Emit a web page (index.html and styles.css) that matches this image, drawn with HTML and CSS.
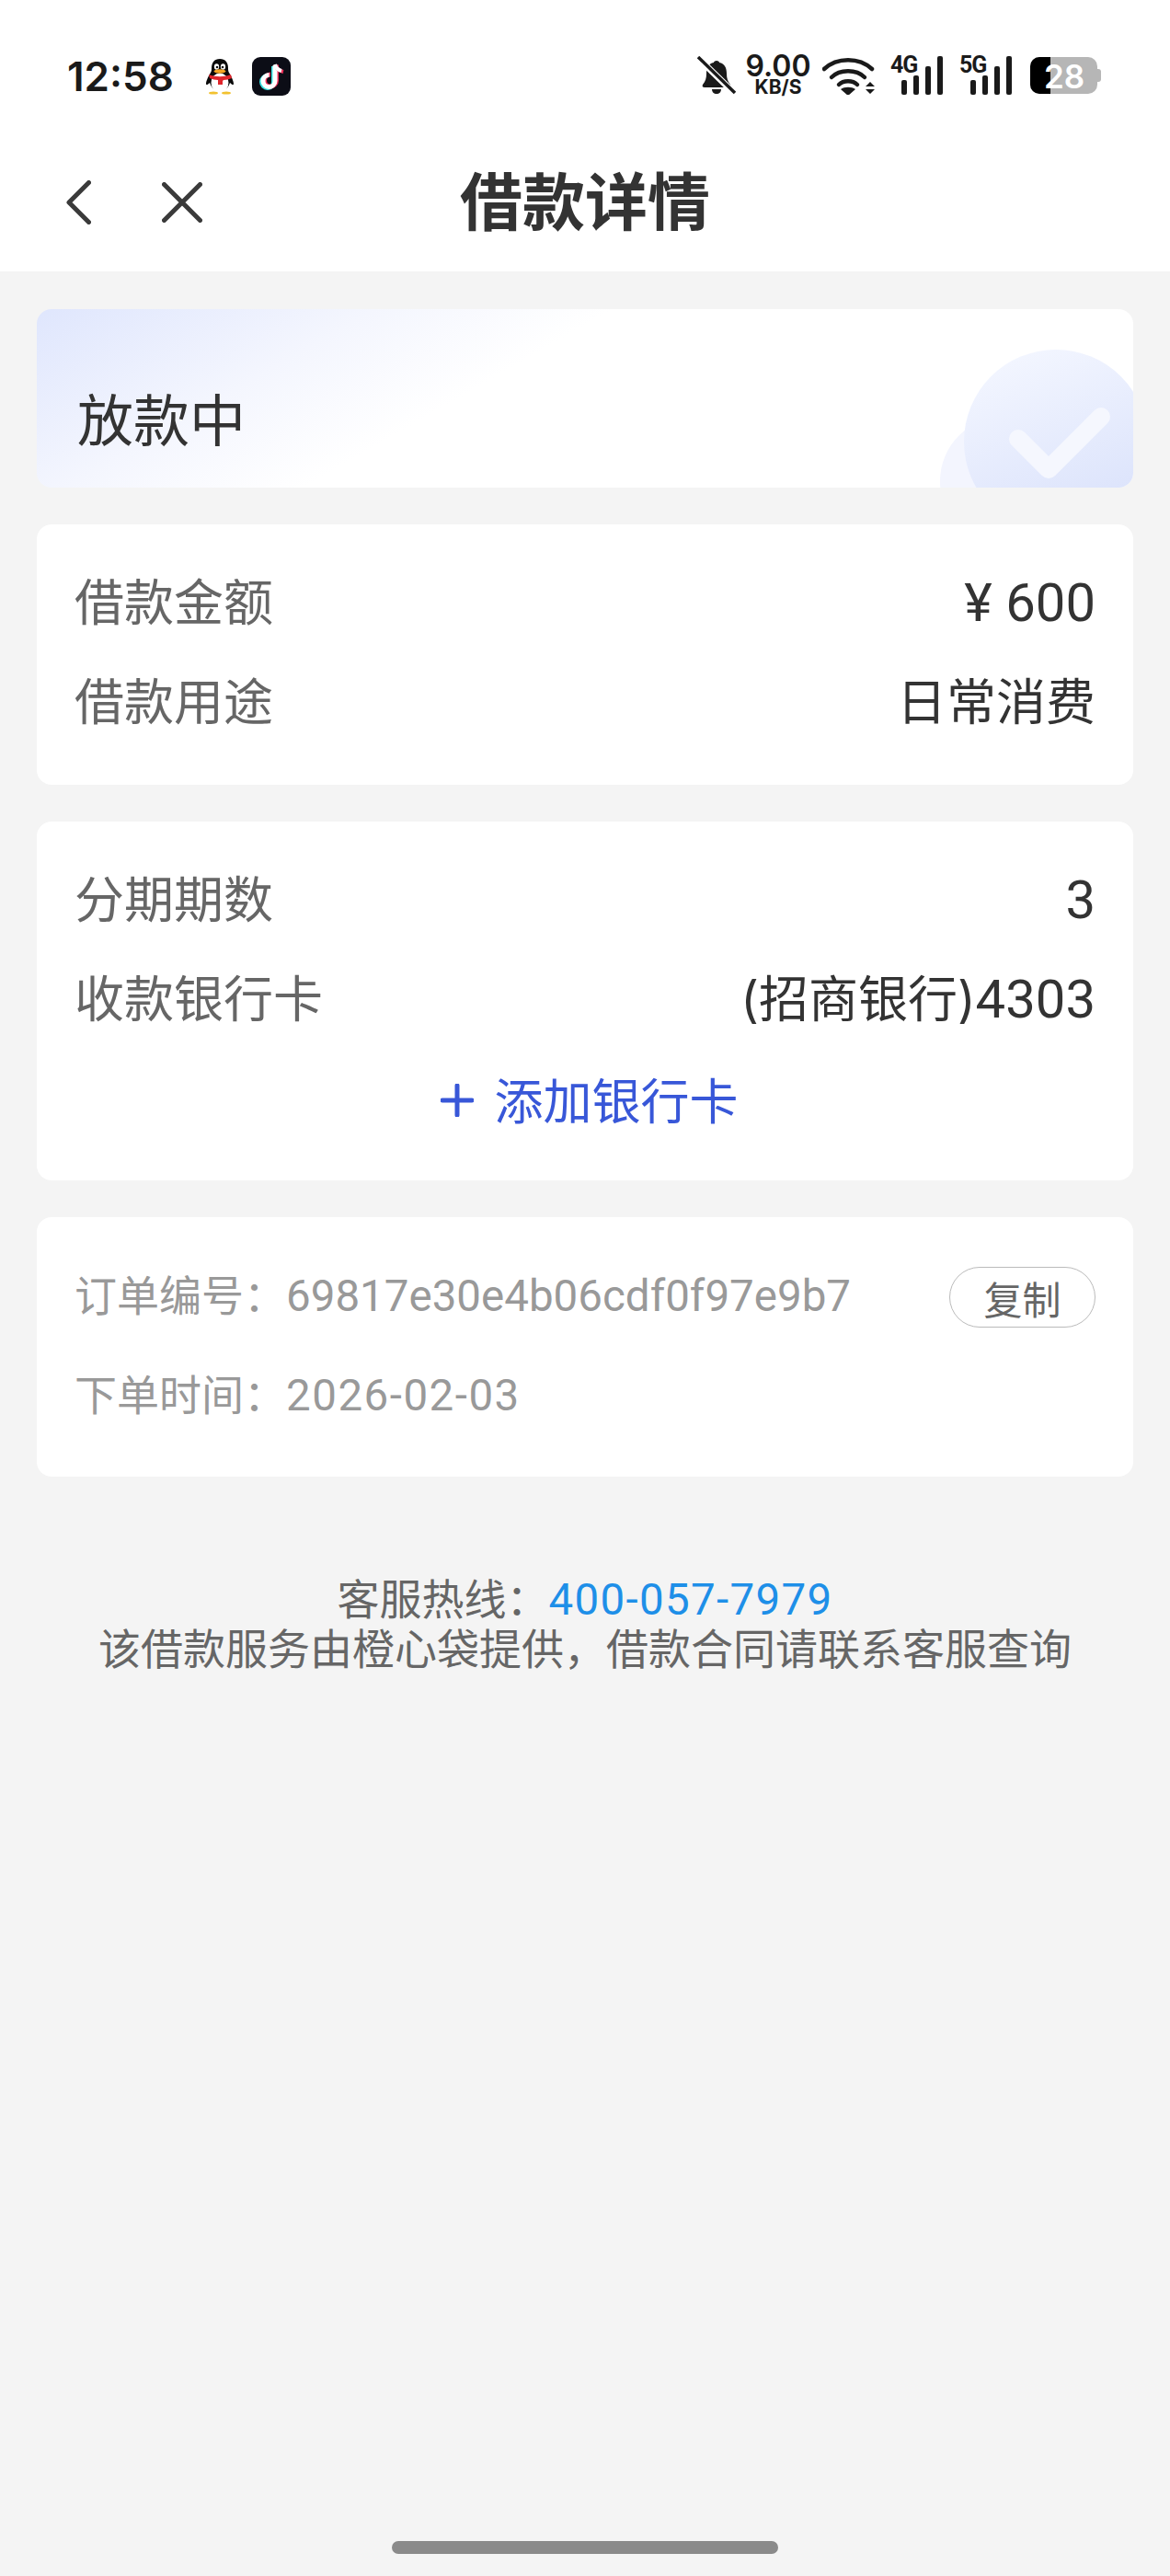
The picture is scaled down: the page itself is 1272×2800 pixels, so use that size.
FILE: index.html
```html
<!DOCTYPE html>
<html lang="zh-CN">
<head>
    <meta charset="UTF-8">
    <meta name="viewport" content="width=device-width, initial-scale=1.0">
    <title>借款详情</title>
    <link rel="stylesheet" href="styles.css">
</head>
<body>
<div class="page">
    <div class="header">
        <div class="status-bar">
            <div class="status-left">
                <span class="time">12:58</span>
                <svg class="icon-qq" viewBox="0 0 32 40" width="32" height="40">
                    <path d="M16 1c-6 0-9 4-9 10 0 2 0 3-1 5-2 3-5 9-5 12 0 2 2 1 4-1 2 6 6 9 11 9s9-3 11-9c2 2 4 3 4 1 0-3-3-9-5-12-1-2-1-3-1-5 0-6-3-10-9-10z" fill="#0b0b0b"/>
                    <ellipse cx="16" cy="27" rx="9.5" ry="10.5" fill="#fff"/>
                    <ellipse cx="12.5" cy="9.5" rx="2.6" ry="3.2" fill="#fff"/>
                    <ellipse cx="19.5" cy="9.5" rx="2.6" ry="3.2" fill="#fff"/>
                    <circle cx="13" cy="10" r="1.3" fill="#111"/>
                    <circle cx="19" cy="10" r="1.3" fill="#111"/>
                    <ellipse cx="16" cy="14.5" rx="6.5" ry="2.2" fill="#f5a623"/>
                    <path d="M4 18c8 3 16 3 24 0l1 4c-3 1-6 2-9 2l-1 1v4h-5v-5c-3 0-6-1-9-2z" fill="#e0262c"/>
                    <ellipse cx="9" cy="38" rx="5" ry="1.6" fill="#f2c230"/>
                    <ellipse cx="23" cy="38" rx="5" ry="1.6" fill="#f2c230"/>
                </svg>
                <svg class="icon-tiktok" viewBox="0 0 42 42" width="42" height="42">
                    <rect width="42" height="42" rx="9" fill="#0c0d16"/>
                    <g fill="none" stroke-width="5">
                        <path d="M25 9v17a6.500 6.500 0 1 1-6.500-6.500" stroke="#3fe0e0" transform="translate(-1.500 1)"/>
                        <path d="M25 9v17a6.500 6.500 0 1 1-6.500-6.500" stroke="#f0305a" transform="translate(1.500 -.500)"/>
                        <path d="M25 9v17a6.500 6.500 0 1 1-6.500-6.500" stroke="#fff"/>
                        <path d="M26 9c1 4 3 6 8 7" stroke="#f0305a" stroke-width="4"/>
                        <path d="M25 8c1 4 3 6 7 7" stroke="#fff" stroke-width="4"/>
                    </g>
                </svg>
            </div>
            <div class="status-right">
                <svg viewBox="0 0 42 42" width="42" height="42">
                    <path d="M21 5c2 0 3 1 3 2 6 1 8 6 8 12 0 5 1 8 4 12 1 2 0 3-2 3H8c-2 0-3-1-2-3 3-4 4-7 4-12 0-6 2-11 8-12 0-1 1-2 3-2z" fill="#1a1a1a"/>
                    <path d="M16 36h10c0 3-2 5-5 5s-5-2-5-5z" fill="#1a1a1a"/>
                    <path d="M0 1 41 41" stroke="#fff" stroke-width="7"/>
                    <path d="M1 1 41 40" stroke="#1a1a1a" stroke-width="3.500"/>
                </svg>
                <div class="speed">
                    <span class="speed-num">9.00</span>
                    <span class="speed-unit">KB/S</span>
                </div>
                <svg viewBox="0 0 58 42" width="58" height="42">
                    <g fill="none" stroke="#1a1a1a" stroke-width="4.500" stroke-linecap="round">
                        <path d="M2 14c14-13 38-13 52 0"/>
                        <path d="M10 23c9-9 27-9 36 0"/>
                        <path d="M18 31c5-5 15-5 20 0"/>
                    </g>
                    <path d="M20 36c4-3 12-3 16 0l-8 7z" fill="#1a1a1a"/>
                    <path d="M47 33l5-5 5 5zM47 36l5 5 5-5z" fill="#1a1a1a"/>
                </svg>
                <div class="signal">
                    <span class="signal-type">4G</span>
                    <i class="bar b1"></i><i class="bar b2"></i><i class="bar b3"></i><i class="bar b4"></i>
                </div>
                <div class="signal">
                    <span class="signal-type">5G</span>
                    <i class="bar b1"></i><i class="bar b2"></i><i class="bar b3"></i><i class="bar b4"></i>
                </div>
                <div class="battery">
                    <div class="battery-level"></div>
                    <span class="battery-num">28</span>
                    <i class="battery-cap"></i>
                </div>
            </div>
        </div>
        <div class="nav">
            <div class="nav-icons">
                <svg viewBox="0 0 27 48" width="27" height="48">
                    <path d="M24.500 2.500 3 24l21.500 21.500" fill="none" stroke="#3a3a3a" stroke-width="5" stroke-linecap="round" stroke-linejoin="round"/>
                </svg>
                <svg viewBox="0 0 44 44" width="44" height="44">
                    <path d="M2.500 2.500l39 39M41.500 2.500l-39 39" fill="none" stroke="#3a3a3a" stroke-width="5" stroke-linecap="round"/>
                </svg>
            </div>
            <h1 class="nav-title">借款详情</h1>
        </div>
    </div>

    <div class="content">
        <div class="card status-card">
            <svg class="status-deco" viewBox="0 0 210 150" width="210" height="150">
                <defs>
                    <linearGradient id="decoFill" x1="0.300" y1="0" x2="0.700" y2="1">
                        <stop offset="0" stop-color="#f3f6ff"/>
                        <stop offset="1" stop-color="#d9e1fb"/>
                    </linearGradient>
                </defs>
                <circle cx="70" cy="143" r="70" fill="#f3f5fe"/>
                <circle cx="126" cy="100" r="100" fill="url(#decoFill)"/>
                <path d="M85 97l33 33 57-57" fill="none" stroke="#f5f7fe" stroke-width="20" stroke-linecap="round" stroke-linejoin="round"/>
            </svg>
            <span class="status-text">放款中</span>
        </div>

        <div class="card">
            <div class="row"><span class="label">借款金额</span><span class="value"><span class="num">¥ 600</span></span></div>
            <div class="row"><span class="label">借款用途</span><span class="value">日常消费</span></div>
        </div>

        <div class="card bank-card">
            <div class="row"><span class="label">分期期数</span><span class="value"><span class="num">3</span></span></div>
            <div class="row"><span class="label">收款银行卡</span><span class="value">(招商银行)<span class="num">4303</span></span></div>
            <div class="add-card">
                <svg viewBox="0 0 36 36" width="36" height="36">
                    <path d="M18 2v32M2 18h32" stroke="#3857d8" stroke-width="5" stroke-linecap="round"/>
                </svg>
                <span>添加银行卡</span>
            </div>
        </div>

        <div class="card order-card">
            <div class="order-row">
                <span>订单编号：<span class="small-num">69817e30e4b06cdf0f97e9b7</span></span>
                <button class="copy-btn">复制</button>
            </div>
            <div class="order-row">
                <span>下单时间：<span class="small-num date">2026-02-03</span></span>
            </div>
        </div>

        <div class="footer-note">
            <div>客服热线：<span class="small-num hotline">400-057-7979</span></div>
            <div>该借款服务由橙心袋提供，借款合同请联系客服查询</div>
        </div>
    </div>

    <div class="home-bar"></div>
</div>
</body>
</html>
```

FILE: styles.css
```css
body {
    margin: 0;
    font-family: "Inter", "Noto Sans CJK SC", sans-serif;
    background-color: #f4f4f4;
    color: #333;
}

.page {
    height: 2800px;
    display: flex;
    flex-direction: column;
    overflow: hidden;
}

/* top area */
.header {
    background-color: #fff;
    height: 295px;
}

.status-bar {
    height: 164px;
    padding: 0 79px 0 73px;
    display: flex;
    justify-content: space-between;
    align-items: flex-start;
}

.status-left {
    display: flex;
    align-items: center;
    height: 42px;
    margin-top: 62px;
}

.time {
    font-size: 44px;
    font-weight: 600;
    color: #1a1a1a;
    width: 150px;
}

.icon-qq {
    margin-right: 19px;
}

.status-right {
    display: flex;
    align-items: center;
    height: 42px;
    margin-top: 61px;
}

.status-right > * {
    flex: none;
}

.speed {
    width: 72px;
    margin: 0 12px 0 10px;
    color: #1a1a1a;
    text-align: center;
    font-weight: 600;
}

.speed-num {
    display: block;
    font-size: 32px;
    line-height: 26px;
}

.speed-unit {
    display: block;
    font-size: 21px;
    line-height: 20px;
    font-weight: 700;
}

.signal {
    width: 57px;
    height: 42px;
    margin-left: 16px;
    position: relative;
    display: flex;
    align-items: flex-end;
    justify-content: flex-end;
    gap: 7px;
}

.signal + .signal {
    margin-left: 18px;
}

.signal-type {
    position: absolute;
    left: 0;
    top: -5px;
    font-family: "Liberation Sans Narrow", "Roboto", sans-serif;
    font-size: 25px;
    font-weight: 700;
    line-height: 30px;
    letter-spacing: -1px;
    color: #1a1a1a;
}

.bar {
    width: 6px;
    background-color: #1a1a1a;
    border-radius: 2px;
}

.b1 { height: 16px; }
.b2 { height: 21px; }
.b3 { height: 31px; }
.b4 { height: 42px; }

.battery {
    width: 73px;
    height: 40px;
    margin-left: 20px;
    position: relative;
    background-color: #b6b6b6;
    border-radius: 10px;
}

.battery-level {
    width: 22px;
    height: 40px;
    background-color: #000;
    border-radius: 10px 0 0 10px;
}

.battery-num {
    position: absolute;
    left: 15px;
    top: 0;
    font-size: 35px;
    line-height: 42px;
    font-weight: 600;
    color: #fff;
}

.battery-cap {
    position: absolute;
    right: -4px;
    top: 13px;
    width: 4px;
    height: 14px;
    background-color: #b6b6b6;
    border-radius: 0 3px 3px 0;
}

.nav {
    position: relative;
    height: 112px;
    display: flex;
    align-items: center;
    justify-content: center;
}

.nav-icons {
    position: absolute;
    left: 72px;
    top: 32px;
    display: flex;
    align-items: center;
    gap: 77px;
}

.nav-title {
    margin: 0;
    font-size: 68px;
    font-weight: 700;
    color: #333;
    line-height: 90px;
}

/* cards */
.content {
    padding: 41px 40px 0;
    display: flex;
    flex-direction: column;
    gap: 40px;
}

.card {
    background-color: #fff;
    border-radius: 16px;
    padding: 32px 41px 35px 41px;
}

.status-card {
    position: relative;
    box-sizing: border-box;
    height: 194px;
    padding: 0 0 0 44px;
    overflow: hidden;
    display: flex;
    align-items: flex-end;
    background: linear-gradient(150deg, #dfe6fd 0%, #f4f6fe 24%, #fff 41%);
}

.status-deco {
    position: absolute;
    right: 0;
    bottom: 0;
}

.status-text {
    position: relative;
    font-size: 61px;
    line-height: 80px;
    margin-bottom: 32px;
    color: #333;
}

.row {
    height: 108px;
    display: flex;
    align-items: center;
    justify-content: space-between;
    font-size: 54px;
    line-height: 70px;
}

.label {
    color: #666;
}

.value {
    color: #333;
}

.num {
    font-family: "Roboto", sans-serif;
    font-size: 58px;
    line-height: 1;
}

.bank-card {
    padding-bottom: 37px;
}

.add-card {
    height: 105px;
    display: flex;
    align-items: center;
    justify-content: center;
    gap: 23px;
    font-size: 53px;
    color: #3857d8;
    margin-left: 9px;
}

.add-card svg {
    margin-top: 4px;
}

.order-card {
    padding: 31px 41px 35px 41px;
}

.order-row {
    height: 108px;
    display: flex;
    align-items: center;
    justify-content: space-between;
    font-size: 46px;
    line-height: 60px;
    color: #999;
}

.small-num {
    font-family: "Roboto", sans-serif;
    font-size: 47.5px;
    line-height: 1;
}

.date {
    letter-spacing: 1.5px;
}

.copy-btn {
    width: 159px;
    height: 66px;
    margin-top: 4px;
    padding: 0;
    background-color: #fff;
    border: 1px solid #bbb;
    border-radius: 33px;
    font-family: inherit;
    font-size: 42px;
    color: #666;
}

.footer-note {
    margin-top: 66px;
    text-align: center;
    font-size: 46px;
    line-height: 54px;
    color: #666;
}

.hotline {
    color: #1e8fe8;
    letter-spacing: 1.3px;
}

.home-bar {
    width: 420px;
    height: 14px;
    margin: auto auto 24px;
    background-color: #8a8a8a;
    border-radius: 7px;
}
```
